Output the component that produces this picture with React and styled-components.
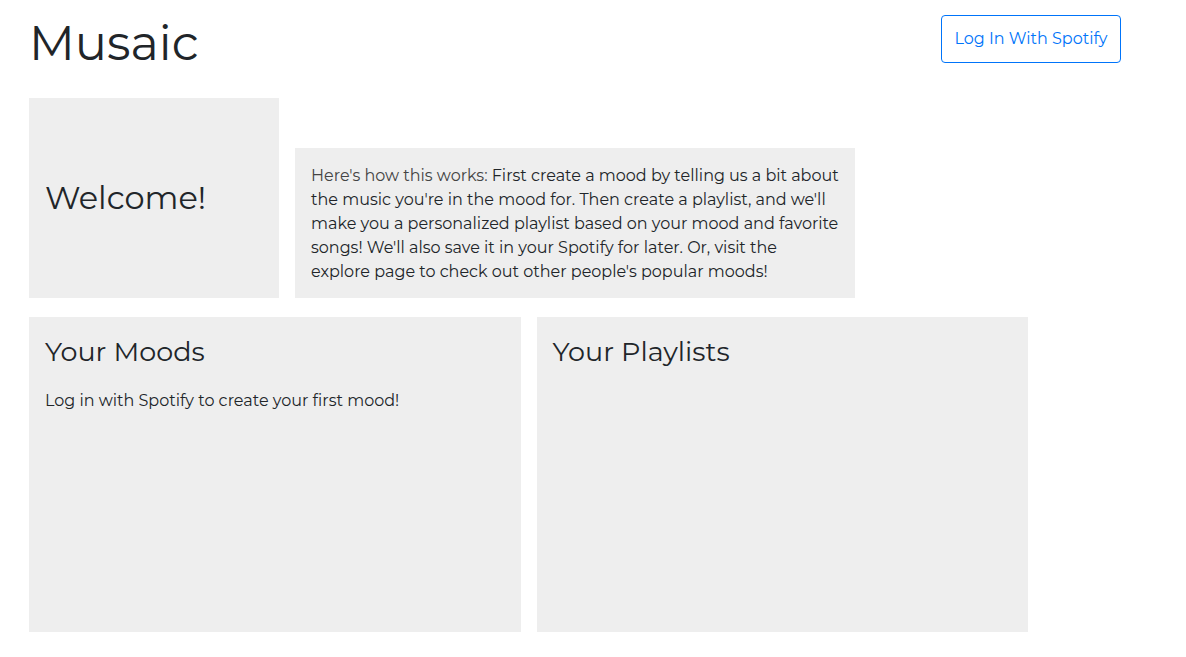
import React from "react";
import styled, { createGlobalStyle } from "styled-components";

const GlobalStyle = createGlobalStyle`
  *, *::before, *::after { box-sizing: border-box; }
  body {
    margin: 0;
    background: #fff;
    color: #212529;
    font-family: Montserrat, Inter, "Liberation Sans", sans-serif;
    font-size: 16px;
    line-height: 24px;
  }
`;

const Page = styled.div`
  padding: 15px 65px 25px 29px;
`;

const Header = styled.header`
  display: flex;
  align-items: flex-start;
  justify-content: space-between;
`;

const Brand = styled.h1`
  margin: 0 0 27px;
  font-size: 48px;
  font-weight: 400;
  line-height: 56px;
`;

const LoginButton = styled.button`
  width: 180px;
  height: 48px;
  padding: 0;
  border: 1px solid #0074fa;
  border-radius: 4px;
  background: #fff;
  color: #0074fa;
  font: inherit;
  white-space: nowrap;
  cursor: pointer;
`;

const Intro = styled.div`
  display: flex;
  align-items: flex-end;
  gap: 16px;
  margin-bottom: 19px;
`;

const Panel = styled.section`
  padding: 16px;
  background: #eee;
`;

const Welcome = styled(Panel)`
  display: flex;
  align-items: center;
  flex: 0 0 250px;
  min-height: 200px;
`;

const HowTo = styled(Panel)`
  flex: 0 1 560px;
  padding: 16px 16px 14px;
`;

const Text = styled.p`
  margin: 0;
`;

const Lead = styled.span`
  color: #444;
`;

const Heading = styled.h2`
  margin: 0;
  font-size: ${({ $size }) => $size}px;
  font-weight: 400;
  line-height: 38px;
`;

const Columns = styled.main`
  display: grid;
  grid-template-columns: 1fr 1fr;
  gap: 16px;
  width: 91.5%;
`;

const ListPanel = styled(Panel)`
  display: flex;
  flex-direction: column;
  gap: 18px;
  min-height: 315px;
`;

export default function App() {
  return (
    <>
      <GlobalStyle />
      <Page>
        <Header>
          <Brand>Musaic</Brand>
          <LoginButton type="button">Log In With Spotify</LoginButton>
        </Header>
        <Intro>
          <Welcome>
            <Heading $size={32}>Welcome!</Heading>
          </Welcome>
          <HowTo>
            <Text>
              <Lead>Here's how this works:</Lead> First create a mood by telling us a bit about
              the music you're in the mood for. Then create a playlist, and we'll
              make you a personalized playlist based on your mood and favorite
              songs! We'll also save it in your Spotify for later. Or, visit the
              explore page to check out other people's popular moods!
            </Text>
          </HowTo>
        </Intro>
        <Columns>
          <ListPanel>
            <Heading $size={27}>Your Moods</Heading>
            <Text>Log in with Spotify to create your first mood!</Text>
          </ListPanel>
          <ListPanel>
            <Heading $size={27}>Your Playlists</Heading>
          </ListPanel>
        </Columns>
      </Page>
    </>
  );
}
